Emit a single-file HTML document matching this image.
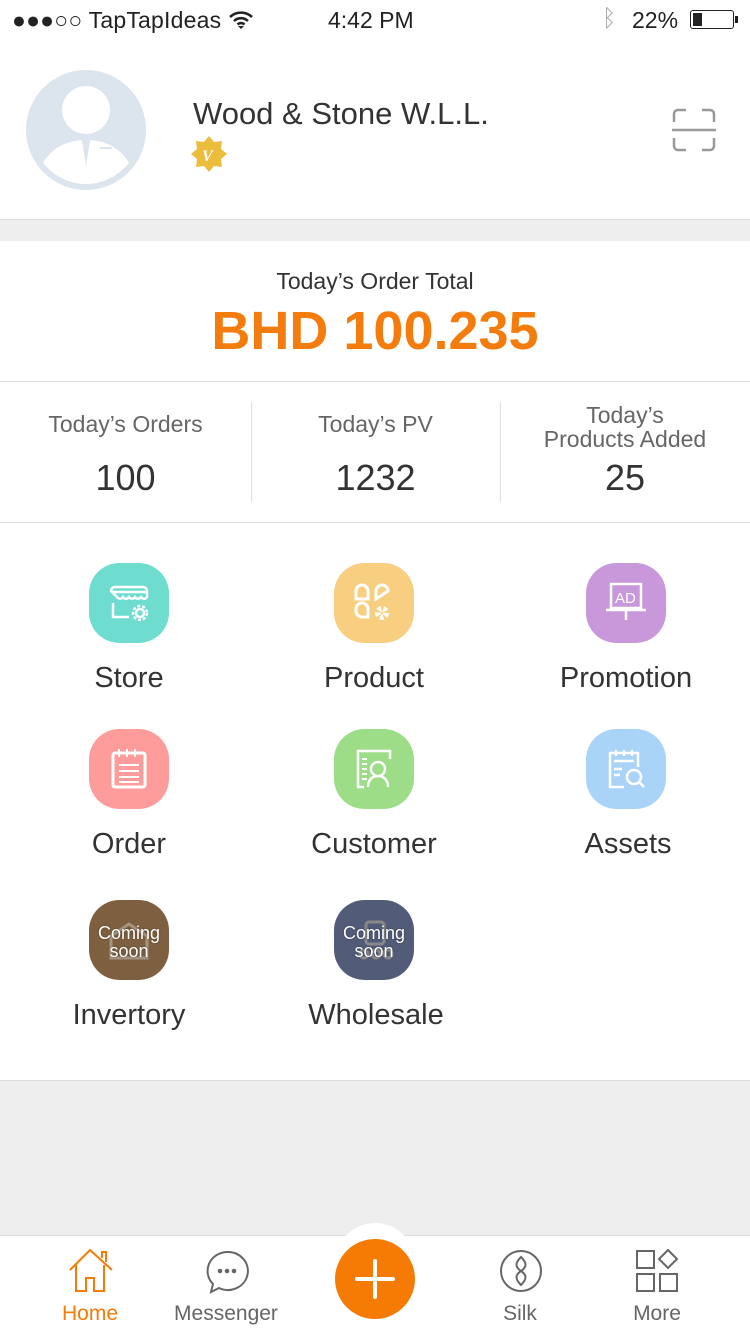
<!DOCTYPE html>
<html><head><meta charset="utf-8"><style>
*{margin:0;padding:0;box-sizing:border-box}
body{width:750px;height:1334px;background:#eeeeee;font-family:"Liberation Sans",sans-serif;position:relative;overflow:hidden;color:#333}
.abs{position:absolute}
.ic{position:absolute;width:80px;height:80px;border-radius:38%;display:flex;align-items:center;justify-content:center}
.lbl{position:absolute;width:250px;text-align:center;font-size:29px;color:#333}
.cs{color:#fff;font-size:18px;line-height:18px;text-align:center;position:absolute;width:80px;top:24px;text-shadow:0 0 2px rgba(0,0,0,.4)}
</style></head><body>
<div class="abs" style="left:0;top:0;width:750px;height:220px;background:#fff;border-bottom:1px solid #ddd"></div>
<div class="abs" style="left:12px;top:7px;font-size:23px;color:#222;letter-spacing:0.2px">●●●○○ TapTapIdeas</div>
<svg class="abs" style="left:228px;top:10px" width="26" height="20" viewBox="0 0 26 20"><path d="M2 7a16 16 0 0 1 22 0M6 11a10 10 0 0 1 14 0M9.5 14.5a5 5 0 0 1 7 0" stroke="#222" stroke-width="2.6" fill="none"/><path d="M13 19l-3-3h6z" fill="#222"/></svg>
<div class="abs" style="left:328px;top:7px;font-size:23px;color:#222">4:42 PM</div>
<div class="abs" style="left:602px;top:5px;font-size:24px;color:#aaa">&#x16D2;</div>
<div class="abs" style="left:632px;top:7px;font-size:23px;color:#222">22%</div>
<div class="abs" style="left:690px;top:10px;width:44px;height:19px;border:1.5px solid #222;border-radius:3px"><div style="width:9px;height:13px;margin:1.5px;background:#222"></div></div>
<div class="abs" style="left:735px;top:16px;width:3px;height:7px;background:#222"></div>
<svg class="abs" style="left:26px;top:70px" width="120" height="120" viewBox="0 0 120 120"><defs><clipPath id="cc"><circle cx="60" cy="60" r="54"/></clipPath></defs><circle cx="60" cy="60" r="60" fill="#dce4ee"/><circle cx="60" cy="40" r="24" fill="#fff"/><g clip-path="url(#cc)"><path d="M8 130c0-40 22-60 52-60s52 20 52 60z" fill="#fff"/></g><path d="M56 70l4 26 4-26z" fill="#dce4ee"/><rect x="74" y="77" width="12" height="2" fill="#dce4ee"/></svg>
<div class="abs" style="left:193px;top:96px;font-size:31px;color:#333">Wood &amp; Stone W.L.L.</div>
<svg class="abs" style="left:190px;top:136px" width="38" height="36" viewBox="0 0 38 36"><path d="M19 0l5 6 8-1-1 8 6 5-6 5 1 8-8-1-5 6-5-6-8 1 1-8-6-5 6-5-1-8 8 1z" fill="#ecbc3c"/><text x="12" y="25" font-size="16" font-style="italic" font-weight="bold" fill="#fff" font-family="Liberation Serif">V</text></svg>
<svg class="abs" style="left:672px;top:108px" width="44" height="44" viewBox="0 0 44 44" fill="none" stroke="#999" stroke-width="2.5"><path d="M2 14V6a4 4 0 0 1 4-4h8M30 2h8a4 4 0 0 1 4 4v8M42 30v8a4 4 0 0 1-4 4h-8M14 42H6a4 4 0 0 1-4-4v-8"/><path d="M0 22h44"/></svg>

<div class="abs" style="left:0;top:241px;width:750px;height:281px;background:#fff"></div>
<div class="abs" style="left:0;top:268px;width:750px;text-align:center;font-size:23px;color:#333">Today’s Order Total</div>
<div class="abs" style="left:0;top:300px;width:750px;text-align:center;font-size:54px;font-weight:bold;color:#f47c0c">BHD 100.235</div>
<div class="abs" style="left:0;top:381px;width:750px;height:1px;background:#ddd"></div>
<div class="abs" style="left:251px;top:402px;width:1px;height:100px;background:#ddd"></div>
<div class="abs" style="left:500px;top:402px;width:1px;height:100px;background:#ddd"></div>
<div class="abs" style="left:0;top:411px;width:251px;text-align:center;font-size:23px;color:#666">Today’s Orders</div>
<div class="abs" style="left:251px;top:411px;width:249px;text-align:center;font-size:23px;color:#666">Today’s PV</div>
<div class="abs" style="left:500px;top:403px;width:250px;text-align:center;font-size:23px;line-height:24px;color:#666">Today’s<br>Products Added</div>
<div class="abs" style="left:0;top:457px;width:251px;text-align:center;font-size:36px;color:#333">100</div>
<div class="abs" style="left:251px;top:457px;width:249px;text-align:center;font-size:36px;color:#333">1232</div>
<div class="abs" style="left:500px;top:457px;width:250px;text-align:center;font-size:36px;color:#333">25</div>
<div class="abs" style="left:0;top:522px;width:750px;height:559px;background:#fff;border-top:1px solid #ddd;border-bottom:1px solid #ddd"></div>

<div class="ic" style="left:89px;top:563px;background:#6fdcd0"><svg width="48" height="48" viewBox="0 0 48 48" fill="none" stroke="#fff" stroke-width="2.5"><path d="M6 12a4 4 0 0 1 4-4h28a4 4 0 0 1 4 4v6c-3 4-6 0-6 0s-3 4-6 0c-3 4-6 0-6 0s-3 4-6 0c-3 4-6 0-6 0z"/><path d="M7 13h34M8 24v14h16"/><circle cx="35" cy="34" r="4"/><circle cx="35" cy="34" r="7" stroke-dasharray="3 2"/></svg></div>
<div class="ic" style="left:334px;top:563px;background:#f8cf80"><svg width="48" height="48" viewBox="0 0 48 48" fill="none" stroke="#fff" stroke-width="3"><path d="M6 20V12a6 6 0 0 1 12 0v8z"/><path d="M26 20V12a6 6 0 0 1 12 0z"/><path d="M6 30a6 6 0 0 1 12 0v8h-6a6 6 0 0 1-6-6z"/><circle cx="32" cy="34" r="4" stroke-dasharray="3 2" stroke-width="6"/></svg></div>
<div class="ic" style="left:586px;top:563px;background:#c998da"><svg width="50" height="50" viewBox="0 0 50 50" fill="none" stroke="#fff" stroke-width="2.5"><rect x="10" y="6" width="30" height="24"/><path d="M5 32h40M25 32v10"/><text x="14" y="25" font-size="15" fill="#fff" stroke="none" font-family="Liberation Sans">AD</text></svg></div>
<div class="ic" style="left:89px;top:729px;background:#fe9b9b"><svg width="48" height="48" viewBox="0 0 48 48" fill="none" stroke="#fff" stroke-width="3"><rect x="8" y="8" width="32" height="34" rx="2"/><path d="M14 4v8M22 4v8M30 4v8M14 20h20M14 26h20M14 32h20M14 37h20" stroke-width="2"/></svg></div>
<div class="ic" style="left:334px;top:729px;background:#9ddd88"><svg width="48" height="48" viewBox="0 0 48 48" fill="none" stroke="#fff" stroke-width="2.5"><path d="M14 42H8V6h32v8"/><path d="M12 14h5M12 19h5M12 24h5M12 29h5M12 34h5" stroke-width="2"/><circle cx="28" cy="24" r="7"/><path d="M18 42c0-7 4-11 10-11s10 4 10 11"/></svg></div>
<div class="ic" style="left:586px;top:729px;background:#a9d4f8"><svg width="48" height="48" viewBox="0 0 48 48" fill="none" stroke="#fff" stroke-width="2.5"><path d="M22 42H8V8h28v14"/><path d="M14 5v6M22 5v6M30 5v6M12 16h20M12 24h8M12 30h6"/><circle cx="32" cy="32" r="7"/><path d="M37 37l5 5"/></svg></div>
<div class="ic" style="left:89px;top:900px;background:#7e6040"><svg width="48" height="48" viewBox="0 0 48 48" fill="none" stroke="#a49480" stroke-width="3"><path d="M6 20L24 8l18 12v22H6z"/></svg><div class="cs">Coming<br>soon</div></div>
<div class="ic" style="left:334px;top:900px;background:#525c78"><svg width="48" height="48" viewBox="0 0 48 48" fill="none" stroke="#888" stroke-width="3"><rect x="16" y="6" width="18" height="22" rx="3"/><circle cx="14" cy="38" r="4"/><circle cx="26" cy="38" r="4"/><circle cx="38" cy="38" r="4"/></svg><div class="cs">Coming<br>soon</div></div>

<div class="lbl" style="left:4px;top:662px">Store</div>
<div class="lbl" style="left:249px;top:662px">Product</div>
<div class="lbl" style="left:501px;top:662px">Promotion</div>
<div class="lbl" style="left:4px;top:828px">Order</div>
<div class="lbl" style="left:249px;top:828px">Customer</div>
<div class="lbl" style="left:503px;top:828px">Assets</div>
<div class="lbl" style="left:4px;top:999px">Invertory</div>
<div class="lbl" style="left:251px;top:999px">Wholesale</div>

<div class="abs" style="left:0;top:1235px;width:750px;height:99px;background:#fff;border-top:1px solid #ddd"></div>
<div class="abs" style="left:335px;top:1223px;width:80px;height:40px;border-radius:40px 40px 0 0;background:#fff"></div>
<div class="abs" style="left:335px;top:1239px;width:80px;height:80px;border-radius:50%;background:#f57b05"></div>
<div class="abs" style="left:373px;top:1259px;width:4px;height:40px;background:#fff;border-radius:2px"></div>
<div class="abs" style="left:355px;top:1277px;width:40px;height:4px;background:#fff;border-radius:2px"></div>
<svg class="abs" style="left:68px;top:1248px" width="46" height="46" viewBox="0 0 46 46" fill="none" stroke="#f57b05" stroke-width="2"><path d="M2 22L22 2l22 20M8 17v26h10V30h8v13h10V17M34 10V4h4v10"/></svg>
<svg class="abs" style="left:205px;top:1250px" width="44" height="44" viewBox="0 0 44 44" fill="none" stroke="#666" stroke-width="2"><path d="M22 2a20 19 0 1 1-8 36l-8 4 2-8A20 19 0 0 1 22 2z"/><circle cx="15" cy="21" r="1.3" fill="#666"/><circle cx="22" cy="21" r="1.3" fill="#666"/><circle cx="29" cy="21" r="1.3" fill="#666"/></svg>
<svg class="abs" style="left:499px;top:1249px" width="44" height="44" viewBox="0 0 44 44" fill="none" stroke="#666" stroke-width="2"><circle cx="22" cy="22" r="20"/><path d="M22 8c-6 6-6 10 0 14s6 8 0 14c-6-6-6-10 0-14s6-8 0-14z"/></svg>
<svg class="abs" style="left:635px;top:1249px" width="44" height="44" viewBox="0 0 44 44" fill="none" stroke="#666" stroke-width="2"><rect x="2" y="2" width="17" height="17"/><path d="M33 1l9 9-9 9-9-9z"/><rect x="2" y="25" width="17" height="17"/><rect x="25" y="25" width="17" height="17"/></svg>
<div class="abs" style="left:40px;top:1302px;width:100px;text-align:center;font-size:21px;color:#f57b05">Home</div>
<div class="abs" style="left:166px;top:1302px;width:120px;text-align:center;font-size:21px;color:#666">Messenger</div>
<div class="abs" style="left:470px;top:1302px;width:100px;text-align:center;font-size:21px;color:#666">Silk</div>
<div class="abs" style="left:607px;top:1302px;width:100px;text-align:center;font-size:21px;color:#666">More</div>
</body></html>
